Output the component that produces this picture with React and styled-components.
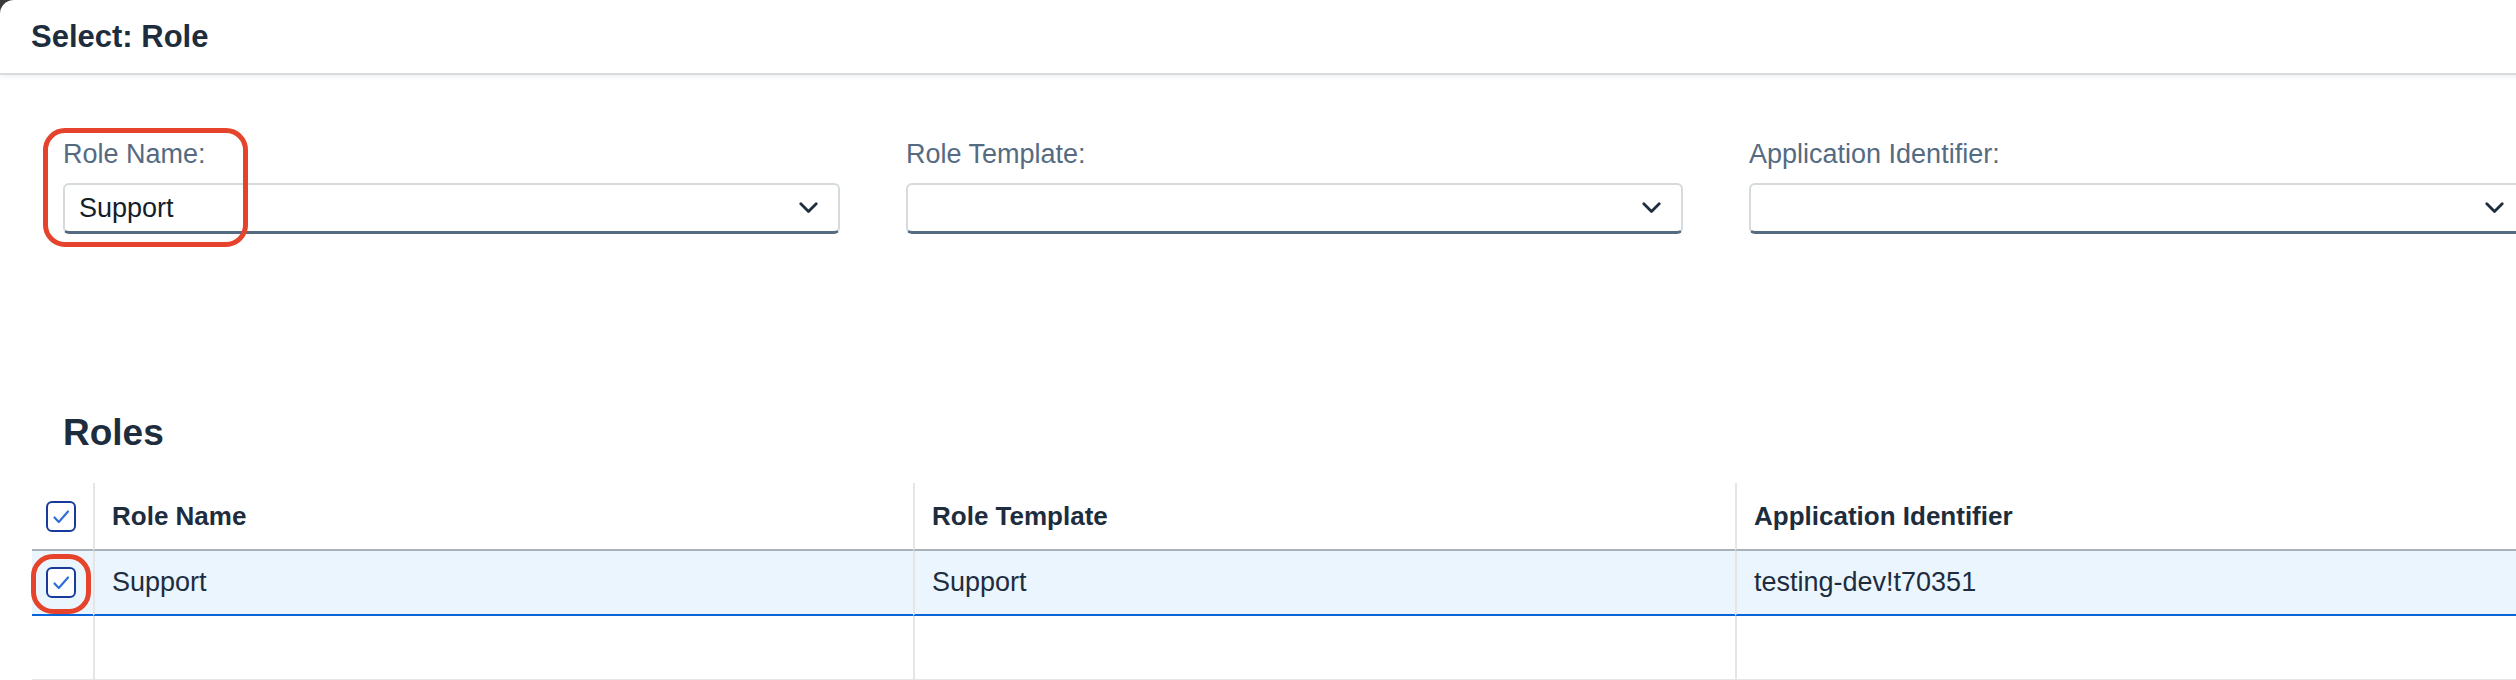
import React from "react";
import styled, { createGlobalStyle } from "styled-components";

const GlobalStyle = createGlobalStyle`
  html, body {
    margin: 0;
    padding: 0;
    background: #3a3a3a;
    overflow: hidden;
  }
  * { box-sizing: border-box; }
`;

const FONT = `"Liberation Sans", Arial, sans-serif`;

const Dialog = styled.div`
  width: 2620px;
  height: 680px;
  background: #ffffff;
  border-top-left-radius: 14px;
  font-family: ${FONT};
  color: #1d2d3e;
  overflow: hidden;
`;

const Header = styled.header`
  height: 75px;
  display: flex;
  align-items: center;
  padding-left: 31px;
  border-bottom: 2px solid #d9dcdf;
  box-shadow: 0 2px 4px rgba(0, 0, 0, 0.06);
`;

const Title = styled.h1`
  margin: 0;
  font-size: 31px;
  font-weight: 700;
  color: #1d2d3e;
`;

const FilterBar = styled.div`
  display: grid;
  grid-template-columns: repeat(3, 777px);
  column-gap: 66px;
  padding: 63px 0 0 63px;
`;

const FilterItem = styled.div`
  position: relative;
  display: flex;
  flex-direction: column;
`;

const Label = styled.label`
  font-size: 27px;
  line-height: 32px;
  color: #556b82;
  margin-bottom: 13px;
`;

const SelectBox = styled.div`
  height: 51px;
  display: flex;
  align-items: center;
  justify-content: space-between;
  padding: 0 20px 0 14px;
  background: #fff;
  border: 2px solid #d5dadd;
  border-bottom: 3px solid #556b82;
  border-radius: 6px;
  font-size: 27px;
  color: #131e29;
`;

const Highlight = styled.div`
  position: absolute;
  border: 5px solid #e5432b;
  border-radius: ${(p) => p.$radius || 22}px;
  pointer-events: none;
`;

const Section = styled.section`
  padding: 178px 0 0 32px;
`;

const SectionTitle = styled.h2`
  margin: 0 0 29px 31px;
  font-size: 37px;
  font-weight: 700;
  color: #1d2d3e;
  line-height: normal;
`;

const Table = styled.div`
  display: grid;
  grid-template-columns: 61px 820px 822px 822px;
`;

const Row = styled.div`
  display: contents;
`;

const Cell = styled.div`
  position: relative;
  height: ${(p) => p.$height}px;
  display: flex;
  align-items: center;
  padding-left: ${(p) => (p.$check ? 14 : 17)}px;
  font-size: ${(p) => (p.$head ? 26 : 27)}px;
  font-weight: ${(p) => (p.$head ? 700 : 400)};
  color: #1d2d3e;
  background: ${(p) => (p.$selected ? "#ebf5fe" : "#ffffff")};
  border-left: ${(p) => (p.$check ? "none" : "2px solid #e5e5e5")};
  border-bottom: 2px solid ${(p) => p.$line};
`;

const CheckBox = styled.span`
  width: 30px;
  height: 31px;
  border: 2px solid #173a9c;
  border-radius: 6px;
  display: flex;
  align-items: center;
  justify-content: center;
  background: #fff;
`;

const Chevron = () => (
  <svg width="19" height="12" viewBox="0 0 19 12" fill="none">
    <path
      d="M1.8 1.8 L9.5 9.5 L17.2 1.8"
      stroke="#1d2d3e"
      strokeWidth="2.8"
      strokeLinecap="round"
      strokeLinejoin="round"
    />
  </svg>
);

const Check = () => (
  <CheckBox>
    <svg width="26" height="27" viewBox="0 0 26 27" fill="none">
      <path
        d="M6.5 14.5 L10.8 19 L20 8.5"
        stroke="#2f6fd6"
        strokeWidth="2.2"
        strokeLinecap="round"
        strokeLinejoin="round"
      />
    </svg>
  </CheckBox>
);

const filters = [
  { label: "Role Name:", value: "Support", marked: true },
  { label: "Role Template:", value: "" },
  { label: "Application Identifier:", value: "" },
];

const columns = ["Role Name", "Role Template", "Application Identifier"];
const rows = [
  { cells: ["Support", "Support", "testing-dev!t70351"], selected: true },
  { cells: ["", "", ""], selected: false, empty: true },
];

export default function App() {
  return (
    <>
      <GlobalStyle />
      <Dialog>
        <Header>
          <Title>Select: Role</Title>
        </Header>

        <FilterBar>
          {filters.map((f) => (
            <FilterItem key={f.label}>
              <Label>{f.label}</Label>
              <SelectBox>
                <span>{f.value}</span>
                <Chevron />
              </SelectBox>
              {f.marked && (
                <Highlight
                  style={{ left: -20, top: -10, width: 205, height: 119 }}
                />
              )}
            </FilterItem>
          ))}
        </FilterBar>

        <Section>
          <SectionTitle>Roles</SectionTitle>
          <Table>
            <Row>
              <Cell $check $head $height={68} $line="#a8b2bd">
                <Check />
              </Cell>
              {columns.map((c) => (
                <Cell key={c} $head $height={68} $line="#a8b2bd">
                  {c}
                </Cell>
              ))}
            </Row>
            {rows.map((r, i) => (
              <Row key={i}>
                <Cell
                  $check
                  $selected={r.selected}
                  $height={65}
                  $line={r.selected ? "#0a64d9" : "#e5e5e5"}
                >
                  {!r.empty && <Check />}
                  {r.selected && (
                    <Highlight
                      $radius={22}
                      style={{ left: -1, top: 3, width: 60, height: 60 }}
                    />
                  )}
                </Cell>
                {r.cells.map((v, j) => (
                  <Cell
                    key={j}
                    $selected={r.selected}
                    $height={65}
                    $line={r.selected ? "#0a64d9" : "#e5e5e5"}
                  >
                    {v}
                  </Cell>
                ))}
              </Row>
            ))}
          </Table>
        </Section>
      </Dialog>
    </>
  );
}
